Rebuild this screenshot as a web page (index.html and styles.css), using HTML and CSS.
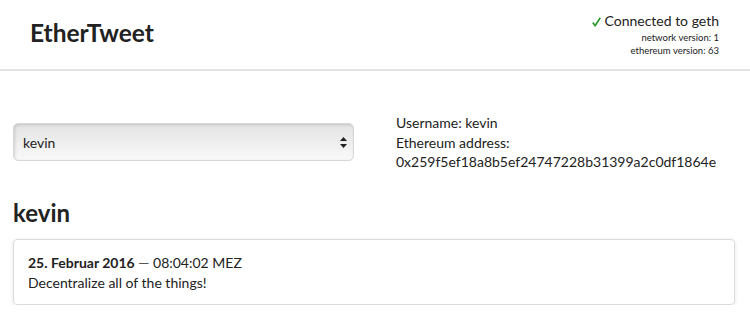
FILE: index.html
```html
<!DOCTYPE html>
<html lang="en">
<head>
  <meta charset="UTF-8">
  <meta name="viewport" content="width=device-width, initial-scale=1.0">
  <title>EtherTweet</title>
  <link rel="stylesheet" href="styles.css">
</head>
<body>
  <header class="topbar">
    <h1 class="brand">EtherTweet</h1>
    <div class="status">
      <div class="status-main">
        <svg class="check" width="9" height="10" viewBox="0 0 9 10"><path d="M0.8 5.6 L3.1 8.8 L8.3 0.8" fill="none" stroke="#2e9a2e" stroke-width="1.7" stroke-linejoin="round"/></svg>
        Connected to geth
      </div>
      <div class="status-sub">network version: 1</div>
      <div class="status-sub">ethereum version: 63</div>
    </div>
  </header>

  <main class="content">
    <div class="account-row">
      <div class="picker">
        <select class="user-select">
          <option>kevin</option>
        </select>
        <svg class="picker-arrows" width="7" height="11" viewBox="0 0 7 11"><path d="M3.5 0 L7 4 L0 4 Z M0 7 L7 7 L3.5 11 Z" fill="#222"/></svg>
      </div>
      <div class="account-info">
        <div>Username: kevin</div>
        <div>Ethereum address:</div>
        <div>0x259f5ef18a8b5ef24747228b31399a2c0df1864e</div>
      </div>
    </div>

    <h2 class="feed-title">kevin</h2>

    <div class="tweet">
      <div class="tweet-meta"><strong>25. Februar 2016</strong> <span class="dash">—</span> 08:04:02 MEZ</div>
      <div class="tweet-text">Decentralize all of the things!</div>
    </div>
  </main>
</body>
</html>
```

FILE: styles.css
```css
html {
  box-sizing: border-box;
}
*, *:before, *:after {
  box-sizing: inherit;
}
body {
  margin: 0;
  padding: 0;
  background: #fff;
  color: #222;
  font-family: Lato, "Open Sans", sans-serif;
  font-size: 14px;
  line-height: 20px;
}

.topbar {
  height: 71px;
  display: flex;
  justify-content: space-between;
  align-items: flex-start;
  padding: 0 31px 0 30px;
  border-bottom: 2px solid #e4e4e4;
}

.brand {
  margin: 18px 0 0;
  font-size: 24.5px;
  line-height: 30px;
  font-weight: bold;
  color: #222;
}

.status {
  padding-top: 11px;
  text-align: right;
}

.status-main {
  font-size: 14px;
  line-height: 20px;
}

.check {
  vertical-align: -1px;
}

.status-sub {
  font-size: 9.5px;
  line-height: 13px;
}

.content {
  padding: 0 15px 0 13px;
}

.account-row {
  display: flex;
  align-items: center;
  margin-top: 42px;
}

.picker {
  position: relative;
  flex: none;
  width: 341px;
  margin-right: 42px;
}

.user-select {
  -webkit-appearance: none;
  appearance: none;
  display: block;
  width: 100%;
  height: 38px;
  padding: 0 9px;
  font-family: Lato, sans-serif;
  font-size: 14px;
  color: #222;
  border: 1px solid #d8d8d8;
  border-radius: 5px;
  background: linear-gradient(#e3e3e3, #f9f9f9);
  box-shadow: inset 1px 1px 3px rgba(0, 0, 0, 0.14);
}

.picker-arrows {
  position: absolute;
  right: 7px;
  top: 14px;
}

.account-info {
  font-size: 14px;
  line-height: 19.5px;
}

.feed-title {
  margin: 26px 0 11px;
  font-size: 24px;
  line-height: 30px;
  font-weight: bold;
}

.tweet {
  border: 1px solid #dcdcdc;
  border-radius: 4px;
  padding: 13px 14px 11px;
  box-shadow: 0 1px 4px rgba(0, 0, 0, 0.1);
}

.tweet-meta strong {
  font-weight: bold;
}

.dash {
  color: #555;
}
```
